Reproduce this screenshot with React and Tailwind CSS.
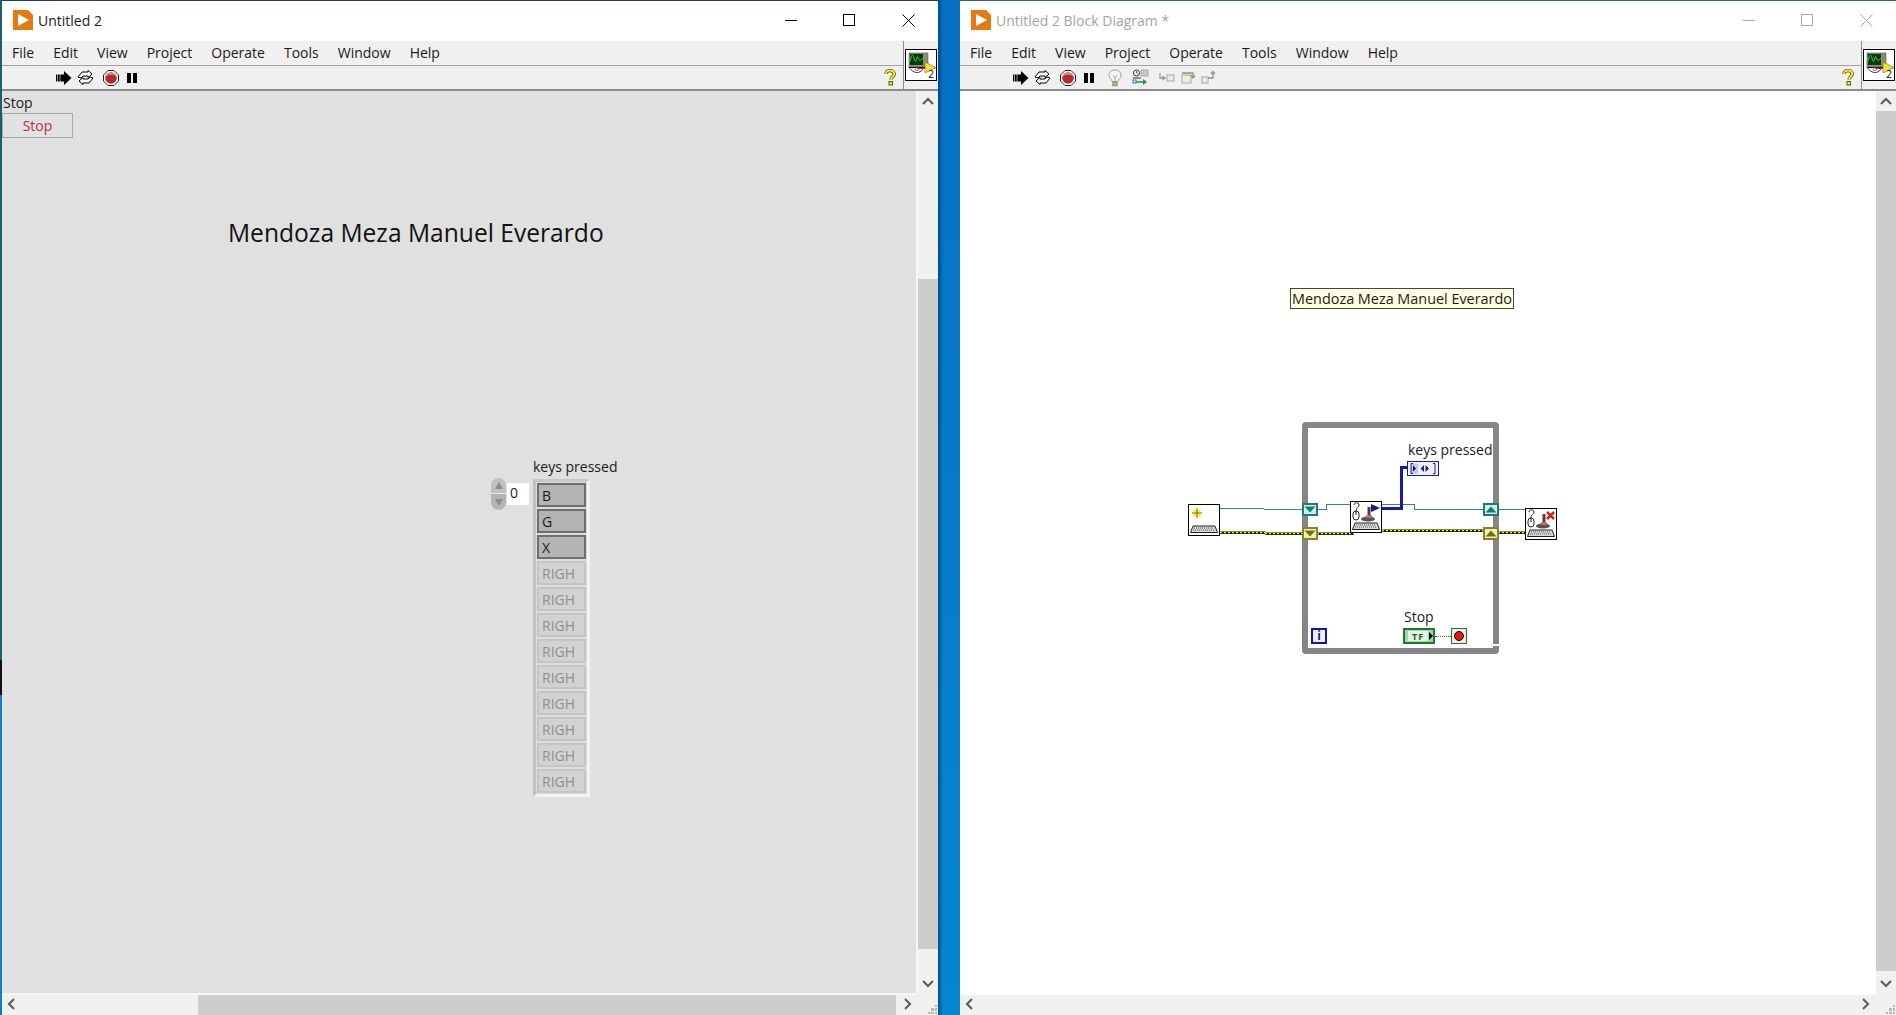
import React from "react";

const FONT = { fontFamily: '"Open Sans","Noto Sans",sans-serif' };

function LvLogo() {
  return (
    <svg width="20" height="20" viewBox="0 0 20 20" className="shrink-0">
      <path d="M0 0H15L20 5V20H0Z" fill="#e57a12" />
      <path d="M5 4L16 10L5 16Z" fill="#fff" />
    </svg>
  );
}

function RunIcon() {
  return (
    <svg width="16" height="14" viewBox="0 0 16 14">
      <path d="M0 3.500H8V0L15.500 7L8 14V10.500H0Z" fill="#000" />
      <path d="M1.500 3V11M4 3V11" stroke="#fff" strokeWidth="0.600" />
    </svg>
  );
}
function RunContIcon() {
  return (
    <svg width="17" height="15" viewBox="0 0 17 15" fill="#fff" stroke="#000" strokeWidth="1">
      <path d="M1 7L5 2H11V0.500L15 4L11 7.500V6H6L4 8Z" />
      <path d="M16 8L12 13H6V14.500L2 11L6 7.500V9H11L13 7Z" />
    </svg>
  );
}
function AbortIcon() {
  return (
    <svg width="16" height="16" viewBox="0 0 16 16">
      <path d="M5 0.500H11L15.500 5V11L11 15.500H5L0.500 11V5Z" fill="#fff" stroke="#222" />
      <circle cx="8" cy="8" r="5.800" fill="#b32a2c" />
      <path d="M3 6.500C5 4 11 4 13 6.500V5C11 2 5 2 3 5Z" fill="#d98b8b" />
    </svg>
  );
}
function PauseIcon() {
  return (
    <div className="flex h-[10px] gap-[2px]">
      <div className="w-[4px] bg-black" />
      <div className="w-[4px] bg-black" />
    </div>
  );
}
function BulbIcon() {
  return (
    <svg width="14" height="18" viewBox="0 0 14 18">
      <path d="M7 1C3 1 1 3.500 1 6.500C1 9 3.500 10 4.300 12.500H9.700C10.500 10 13 9 13 6.500C13 3.500 11 1 7 1Z" fill="#f4f4f4" stroke="#999" />
      <path d="M5 6L7 9L9 6M7 9V12" stroke="#aaa" fill="none" />
      <rect x="4.500" y="13" width="5" height="4" fill="#b7ad6a" stroke="#888" strokeWidth="0.500" />
    </svg>
  );
}
function RetainIcon() {
  return (
    <svg width="18" height="17" viewBox="0 0 18 17">
      <circle cx="4.500" cy="4" r="3" fill="#fff" stroke="#333" />
      <path d="M4.500 2V4L6 5" stroke="#333" fill="none" strokeWidth="0.800" />
      <rect x="9" y="1" width="7" height="6" fill="#c8c8c8" stroke="#999" strokeWidth="0.700" />
      <path d="M1 9H9" stroke="#333" />
      <rect x="1" y="11" width="3" height="3" fill="#fff" stroke="#2a6fbf" />
      <path d="M4 13H11" stroke="#1d8f3c" strokeWidth="1.500" />
      <path d="M11 10L15 13L11 16Z" fill="#1d9a40" />
    </svg>
  );
}
function StepInIcon() {
  return (
    <svg width="16" height="13" viewBox="0 0 16 13" fill="none">
      <path d="M1 2V7H5M3.500 5L6 7L3.500 9" stroke="#9a9a9a" strokeWidth="1.300" />
      <rect x="8" y="4" width="7" height="6" fill="#eeeed2" stroke="#a5a5a5" />
    </svg>
  );
}
function StepOverIcon() {
  return (
    <svg width="16" height="15" viewBox="0 0 16 15" fill="none">
      <rect x="1" y="5" width="9" height="8" fill="#eeeed2" stroke="#a5a5a5" />
      <path d="M1 3H12V7M10 5.500L12 8L14 5.500" stroke="#8f8f8f" strokeWidth="1.300" />
    </svg>
  );
}
function StepOutIcon() {
  return (
    <svg width="16" height="15" viewBox="0 0 16 15" fill="none">
      <rect x="1" y="7" width="6" height="6" fill="#eeeed2" stroke="#a5a5a5" />
      <path d="M7 8H12V2M10 4L12 1.500L14 4" stroke="#8f8f8f" strokeWidth="1.300" />
    </svg>
  );
}
function HelpIcon() {
  return (
    <svg width="12" height="17" viewBox="0 0 12 17">
      <path d="M2 5C2 2.500 4 1.500 6 1.500C8.500 1.500 10.200 3 10.200 5C10.200 7.500 7 7.500 7 10.500" fill="none" stroke="#55551c" strokeWidth="3.400" />
      <path d="M2 5C2 2.500 4 1.500 6 1.500C8.500 1.500 10.200 3 10.200 5C10.200 7.500 7 7.500 7 10.500" fill="none" stroke="#f6ee2a" strokeWidth="1.800" />
      <rect x="5" y="12.500" width="3.500" height="3.500" fill="#f6ee2a" stroke="#55551c" />
    </svg>
  );
}
function ViIcon() {
  return (
    <div className="relative h-[32px] w-[32px] border border-black bg-white">
      <svg width="30" height="30" viewBox="0 0 30 30" className="absolute left-0 top-0 overflow-visible">
        <rect x="3" y="3" width="19" height="14" fill="#8d8d73" stroke="#555" strokeWidth="0.600" />
        <rect x="4" y="4" width="13" height="11" fill="#063b10" />
        <path d="M4 11C6 3 7 4 8.500 10C10 15 11 5 12 7C13 10 14 12 17 8" fill="none" stroke="#38d04a" />
        <path d="M3 17C7 24 14 24 17 19" fill="none" stroke="#2b2f9e" />
        <path d="M3 17.500H29" stroke="#111" />
        <path d="M11 18.500H29" stroke="#d8332b" />
        <circle cx="11" cy="19" r="1.800" fill="none" stroke="#c33" strokeWidth="0.700" />
        <path d="M19 12L30 17.500L19 23Z" fill="#eee230" stroke="#77701a" strokeWidth="0.600" />
      </svg>
      <span className="absolute bottom-0 right-[2px] text-[10px] leading-[12px] text-black">2</span>
    </div>
  );
}

function Chevron({ dir, className = "" }) {
  const d = {
    up: "M1 7L6 2L11 7",
    down: "M1 2L6 7L11 2",
    left: "M7 1L2 6L7 11",
    right: "M2 1L7 6L2 11",
  }[dir];
  const vert = dir === "up" || dir === "down";
  return (
    <svg width={vert ? 12 : 9} height={vert ? 9 : 12} viewBox={vert ? "0 0 12 9" : "0 0 9 12"} className={className}>
      <path d={d} fill="none" stroke="#5a5a5a" strokeWidth="2" />
    </svg>
  );
}

function Grip() {
  return (
    <div className="grid h-[9px] w-[9px] grid-cols-3 gap-[1px]">
      {[0, 0, 1, 0, 1, 1, 1, 1, 1].map((v, i) => (
        <div key={i} className={v ? "bg-[#b8b8b8]" : ""} />
      ))}
    </div>
  );
}

function TitleBar({ title, dim }) {
  return (
    <div className="flex h-[40px] shrink-0 items-center bg-white pb-[2px] pl-[11px]">
      <LvLogo />
      <span className={`ml-[5px] text-[14px] ${dim ? "text-[#a3a3a3]" : "text-[#1a1a1a]"}`}>{title}</span>
      <div className="ml-auto flex items-center">
        <div className="flex w-[58px] justify-center">
          <div className={`h-px w-[12px] ${dim ? "bg-[#a8a8a8]" : "bg-black"}`} />
        </div>
        <div className="flex w-[58px] justify-center">
          <div className={`h-[12px] w-[12px] border ${dim ? "border-[#a8a8a8]" : "border-black"}`} />
        </div>
        <div className="flex w-[60px] justify-center">
          <svg width="13" height="13" viewBox="0 0 13 13">
            <path d="M0.500 0.500L12.500 12.500M12.500 0.500L0.500 12.500" stroke={dim ? "#a8a8a8" : "#000"} />
          </svg>
        </div>
      </div>
    </div>
  );
}

function MenuBar() {
  const items = ["File", "Edit", "View", "Project", "Operate", "Tools", "Window", "Help"];
  return (
    <div className="flex h-[25px] items-center gap-[19px] border-b border-[#a0a0a0] pb-[2px] pl-[10px] text-[14px] text-[#1a1a1a]">
      {items.map((m) => (
        <span key={m}>{m}</span>
      ))}
    </div>
  );
}

function Header({ diagram }) {
  return (
    <div className="flex h-[50px] shrink-0 border-b-2 border-[#8c8c8c] bg-[#f0f0f0]">
      <div className="flex min-w-0 flex-1 flex-col border-r border-[#8c8c8c]">
        <MenuBar />
        <div className="flex h-[23px] items-center pr-[7px]">
          <div className={`flex items-center ${diagram ? "ml-[53px]" : "ml-[54px]"} gap-[5px]`}>
            <RunIcon />
            <RunContIcon />
            <div className="ml-[4px]"><AbortIcon /></div>
            <div className="ml-[3px]"><PauseIcon /></div>
            {diagram && (
              <div className="ml-[9px] flex items-center">
                <BulbIcon />
                <div className="ml-[10px]"><RetainIcon /></div>
                <div className="ml-[9px]"><StepInIcon /></div>
                <div className="ml-[6px]"><StepOverIcon /></div>
                <div className="ml-[4px]"><StepOutIcon /></div>
              </div>
            )}
          </div>
          <div className="ml-auto"><HelpIcon /></div>
        </div>
      </div>
      <div className="flex w-[34px] shrink-0 items-center justify-center pb-[1px]">
        <ViIcon />
      </div>
    </div>
  );
}

function VScroll({ thumbTop, thumbH, track }) {
  return (
    <div className={`flex h-full w-[20px] shrink-0 flex-col items-center ${track}`}>
      <div className="flex h-[20px] shrink-0 items-center justify-center self-stretch bg-[#f0f0f0]"><Chevron dir="up" /></div>
      <div className="min-h-0 w-full flex-1 overflow-hidden">
        <div style={{ marginTop: thumbTop, height: thumbH }} className="w-full bg-[#cdcdcd]" />
      </div>
      <div className="flex h-[24px] shrink-0 items-center justify-center self-stretch bg-[#f0f0f0]"><Chevron dir="down" /></div>
    </div>
  );
}

function ArrayItem({ label, active }) {
  return (
    <div
      className={
        active
          ? "flex h-[24px] w-[49px] items-center border-2 border-[#6e6e6e] bg-[#b4b4b4] pl-[3px] text-[14px] text-[#1a1a1a]"
          : "flex h-[24px] w-[49px] items-center border-2 border-[#c4c4c4] bg-[#d2d2d2] pl-[3px] text-[14px] text-[#8f8f8f]"
      }
    >
      {label}
    </div>
  );
}

function FrontPanel() {
  const rows = ["B", "G", "X", ...Array(9).fill("RIGH")];
  return (
    <div className="relative min-w-0 flex-1 overflow-hidden border-r-2 border-b-2 border-[#f6f6f6] bg-[#e0e0e0]">
      <div className="absolute left-[1px] top-[2px] text-[14px] leading-[19px] text-[#1a1a1a]">Stop</div>
      <div className="absolute left-0 top-[22px] flex h-[25px] w-[71px] items-center justify-center border border-[#a9a9a9] bg-[#e2e2e2] text-[14px] text-[#b03040]">
        Stop
      </div>
      <div className="absolute left-[226px] top-[125px] text-[24.6px] leading-[33px] text-[#111]">Mendoza Meza Manuel Everardo</div>
      <div className="absolute left-[531px] top-[366px] text-[14px] leading-[19px] text-[#1a1a1a]">keys pressed</div>
      <div className="absolute left-[489px] top-[387px] flex items-center">
        <div className="flex w-[15px] flex-col items-center">
          <div className="flex h-[16px] w-[15px] items-center justify-center rounded-t-full border-b border-[#e8e8e8] bg-[#c0c0c0]">
            <div className="h-0 w-0 border-x-[4px] border-b-[7px] border-x-transparent border-b-[#8c8c8c]" />
          </div>
          <div className="flex h-[16px] w-[15px] items-center justify-center rounded-b-full bg-[#b4b4b4]">
            <div className="h-0 w-0 border-x-[4px] border-t-[7px] border-x-transparent border-t-[#8c8c8c]" />
          </div>
        </div>
        <div className="ml-[1px] flex h-[22px] w-[22px] items-start bg-white pl-[3px] text-[14px] leading-[20px] text-[#1a1a1a]">0</div>
      </div>
      <div className="absolute left-[531px] top-[388px] flex flex-col gap-[2px] border-[3px] border-b-[#f2f2f2] border-l-[#c0c0c0] border-r-[#f2f2f2] border-t-[#c8c8c8] bg-[#dcdcdc] py-[1px] pl-[1px] pr-[1px]">
        {rows.map((r, i) => (
          <ArrayItem key={i} label={r} active={i < 3} />
        ))}
      </div>
    </div>
  );
}

function Wire({ x, y, w, h, className }) {
  return <div className={`absolute ${className}`} style={{ left: x, top: y, width: w, height: h }} />;
}

function YellowWire({ x, y, w }) {
  return (
    <div className="absolute" style={{ left: x, top: y, width: w, height: 3 }}>
      <svg width={w} height="3" className="block">
        <rect width={w} height="3" fill="#1c1c00" />
        <line x1="0" y1="1.500" x2={w} y2="1.500" stroke="#ecec3a" strokeWidth="1.500" strokeDasharray="2 2" />
        <line x1="0" y1="0.500" x2={w} y2="0.500" stroke="#8e8e22" />
      </svg>
    </div>
  );
}

function Keyboard() {
  return (
    <svg x="2" y="21" width="28" height="9" viewBox="0 0 28 9">
      <path d="M3 1H25L27.500 7.500H0.500Z" fill="#d8d8d8" stroke="#222" />
      <path d="M4 3H24M3 5H25" stroke="#555" strokeDasharray="1 1" />
    </svg>
  );
}

function Joy() {
  return (
    <g>
      <path d="M4 4C4 1 9 1 9 4C9 7 6 6 6 10" fill="none" stroke="#222" />
      <rect x="3" y="10" width="6" height="9" rx="3" fill="#fff" stroke="#222" />
      <path d="M6 10V14" stroke="#222" />
      <path d="M19 6V15" stroke="#444" strokeWidth="3" />
      <ellipse cx="18" cy="18" rx="7" ry="2.500" fill="#555" />
      <ellipse cx="19" cy="15.500" rx="3.500" ry="1.500" fill="#c86a6a" />
    </g>
  );
}

function NodeIcon({ x, y, children }) {
  return (
    <svg width="32" height="32" viewBox="0 0 32 32" className="absolute" style={{ left: x, top: y }}>
      <rect x="0.500" y="0.500" width="31" height="31" fill="#fff" stroke="#000" />
      {children}
      <Keyboard />
    </svg>
  );
}

function Tunnel({ x, y, dir, teal }) {
  const tri = dir === "down" ? "M2.500 3.500H13.500L8 9.500Z" : "M2.500 9.500H13.500L8 3.500Z";
  return (
    <svg width="16" height="13" viewBox="0 0 16 13" className="absolute" style={{ left: x, top: y }}>
      <rect x="1" y="1" width="14" height="11" fill={teal ? "#d4ece8" : "#efeebc"} stroke={teal ? "#1f7a70" : "#84841f"} strokeWidth="2" />
      <path d={tri} fill={teal ? "#0f7f75" : "#727212"} />
    </svg>
  );
}

const TEAL = "bg-[#2e8a84]";
const BLUE = "bg-[#1818b0]";

function Diagram() {
  return (
    <div className="relative min-w-0 flex-1 overflow-hidden bg-white">
      <div className="absolute left-[330px] top-[197px] flex h-[21px] w-[224px] items-center justify-center border border-[#444] bg-[#ffffe0] text-[14.400px] text-[#1a1a1a]">
        Mendoza Meza Manuel Everardo
      </div>

      <div className="absolute left-[342px] top-[331px] h-[232px] w-[197px] rounded-[4px] border-[6px] border-[#868686]" />
      <div className="absolute left-[533px] top-[553px] h-[2px] w-[6px] bg-white" />

      <div className="absolute left-[448px] top-[349px] text-[14px] leading-[19px] text-[#1a1a1a]">keys pressed</div>

      <Wire x={260} y={417} w={44} h={1} className={TEAL} />
      <Wire x={304} y={418} w={38} h={1} className={TEAL} />
      <Wire x={357} y={418} w={9} h={1} className={TEAL} />
      <Wire x={366} y={413} w={1} h={6} className={TEAL} />
      <Wire x={366} y={413} w={24} h={1} className={TEAL} />
      <Wire x={422} y={413} w={32} h={1} className={TEAL} />
      <Wire x={454} y={413} w={1} h={6} className={TEAL} />
      <Wire x={454} y={418} w={69} h={1} className={TEAL} />
      <Wire x={538} y={418} w={27} h={1} className={TEAL} />

      <YellowWire x={260} y={440} w={45} />
      <YellowWire x={305} y={441} w={37} />
      <YellowWire x={357} y={441} w={37} />
      <YellowWire x={422} y={438} w={101} />
      <YellowWire x={538} y={440} w={27} />

      <Wire x={422} y={416} w={21} h={3} className={BLUE} />
      <Wire x={440} y={375} w={3} h={44} className={BLUE} />
      <Wire x={440} y={375} w={8} h={3} className={BLUE} />

      <div className="absolute left-[447px] top-[370px] flex h-[15px] w-[32px] items-center justify-center border border-[#1b1bb0] bg-[#f2f2fd]">
        <svg width="28" height="13" viewBox="0 0 28 13">
          <rect x="2" y="1.500" width="7" height="10" fill="#c4c4ee" />
          <path d="M4 1.500H2V11.500H4" fill="none" stroke="#1b1bb0" />
          <path d="M4 3.500L7 6.500L4 9.500Z" fill="#111" />
          <path d="M15 3L11.500 6.500L15 10ZM16.500 3L20 6.500L16.500 10Z" fill="#1b1bb0" />
          <path d="M24 1.500H26V11.500H24" fill="none" stroke="#1b1bb0" />
        </svg>
      </div>

      <NodeIcon x={228} y={413}>
        <g stroke="#e8e000" strokeWidth="1.500">
          <path d="M9 4V14M4 9H14M5.500 5.500L12.500 12.500M12.500 5.500L5.500 12.500" />
        </g>
        <g stroke="#222" strokeWidth="0.500">
          <path d="M9 4V14M4 9H14" />
        </g>
      </NodeIcon>

      <NodeIcon x={390} y={410}>
        <Joy />
        <path d="M21 3L30 7L21 11Z" fill="#1a1a8c" />
      </NodeIcon>

      <NodeIcon x={565} y={417}>
        <Joy />
        <path d="M22 4L29 11M29 4L22 11" stroke="#e01818" strokeWidth="2.500" />
      </NodeIcon>

      <Tunnel x={342} y={412} dir="down" teal />
      <Tunnel x={342} y={436} dir="down" />
      <Tunnel x={523} y={412} dir="up" teal />
      <Tunnel x={523} y={436} dir="up" />

      <div className="absolute left-[351px] top-[537px] flex h-[16px] w-[16px] items-center justify-center border-2 border-[#1414b4] bg-[#eef0fa] text-[12px] font-bold leading-none text-[#1414b4]">i</div>

      <div className="absolute left-[444px] top-[516px] text-[14px] leading-[19px] text-[#1a1a1a]">Stop</div>
      <div className="absolute left-[443px] top-[537px] flex h-[16px] w-[32px] items-center border-2 border-[#1c7a2c] bg-[#a9d3ae] pl-[3px]">
        <span className="flex h-[10px] w-[20px] items-center justify-center bg-[#e5f2e5] text-[9px] font-bold leading-none tracking-[1px] text-[#1c5c28]">TF</span>
        <div className="ml-[1px] h-0 w-0 border-y-[4px] border-l-[4px] border-y-transparent border-l-black" />
      </div>
      <Wire x={475} y={545} w={16} h={1} className="border-t border-dotted border-[#1c7a2c]" />
      <div className="absolute left-[491px] top-[537px] flex h-[16px] w-[16px] items-center justify-center border border-[#1c7a2c] bg-[#ececec]">
        <div className="h-[10px] w-[10px] rounded-full border border-black bg-[#e81414]" />
      </div>
    </div>
  );
}

function HScroll({ children }) {
  return <div className="flex h-[20px] shrink-0 items-center bg-[#f0f0f0]">{children}</div>;
}

export default function App() {
  return (
    <div style={FONT} className="flex h-[1015px] w-[1896px] overflow-hidden bg-[#0672c8]">
      <div className="flex w-[2px] shrink-0 flex-col">
        <div className="h-[660px] bg-[#1c5f6c]" />
        <div className="h-[35px] bg-[#111]" />
        <div className="flex-1 bg-[#0a80c0]" />
      </div>
      <div className="flex w-[936px] shrink-0 flex-col border-t border-[#23404a] bg-white">
        <TitleBar title="Untitled 2" />
        <Header />
        <div className="flex min-h-0 flex-1 bg-[#f0f0f0]">
          <FrontPanel />
          <VScroll thumbTop={168} thumbH={670} track="bg-[#f0f0f0]" />
        </div>
        <HScroll>
          <div className="flex h-full w-[916px] items-center pb-[2px] pl-[5px] pr-[6px]">
            <Chevron dir="left" />
            <div className="ml-[182px] h-[20px] w-[698px] translate-y-[1px] bg-[#cdcdcd]" />
            <Chevron dir="right" className="ml-auto" />
          </div>
          <div className="flex flex-1 justify-end pr-[1px] pt-[9px]"><Grip /></div>
        </HScroll>
      </div>
      <div className="w-[22px] shrink-0 bg-[linear-gradient(90deg,rgba(0,40,80,0.55),rgba(0,0,0,0)_22%),linear-gradient(180deg,#0670c4,#0686d0)]" />
      <div className="flex w-[936px] shrink-0 flex-col border-t border-[#3a5f7a] bg-white">
        <TitleBar title="Untitled 2 Block Diagram *" dim />
        <Header diagram />
        <div className="flex min-h-0 flex-1 bg-[#f0f0f0]">
          <Diagram />
          <VScroll thumbTop={0} thumbH={860} track="bg-[#cdcdcd]" />
        </div>
        <HScroll>
          <div className="flex h-full w-[916px] items-center justify-between pb-[2px] pl-[5px] pr-[6px]">
            <Chevron dir="left" />
            <Chevron dir="right" />
          </div>
          <div className="flex flex-1 justify-end pr-[1px] pt-[9px]"><Grip /></div>
        </HScroll>
      </div>
    </div>
  );
}
